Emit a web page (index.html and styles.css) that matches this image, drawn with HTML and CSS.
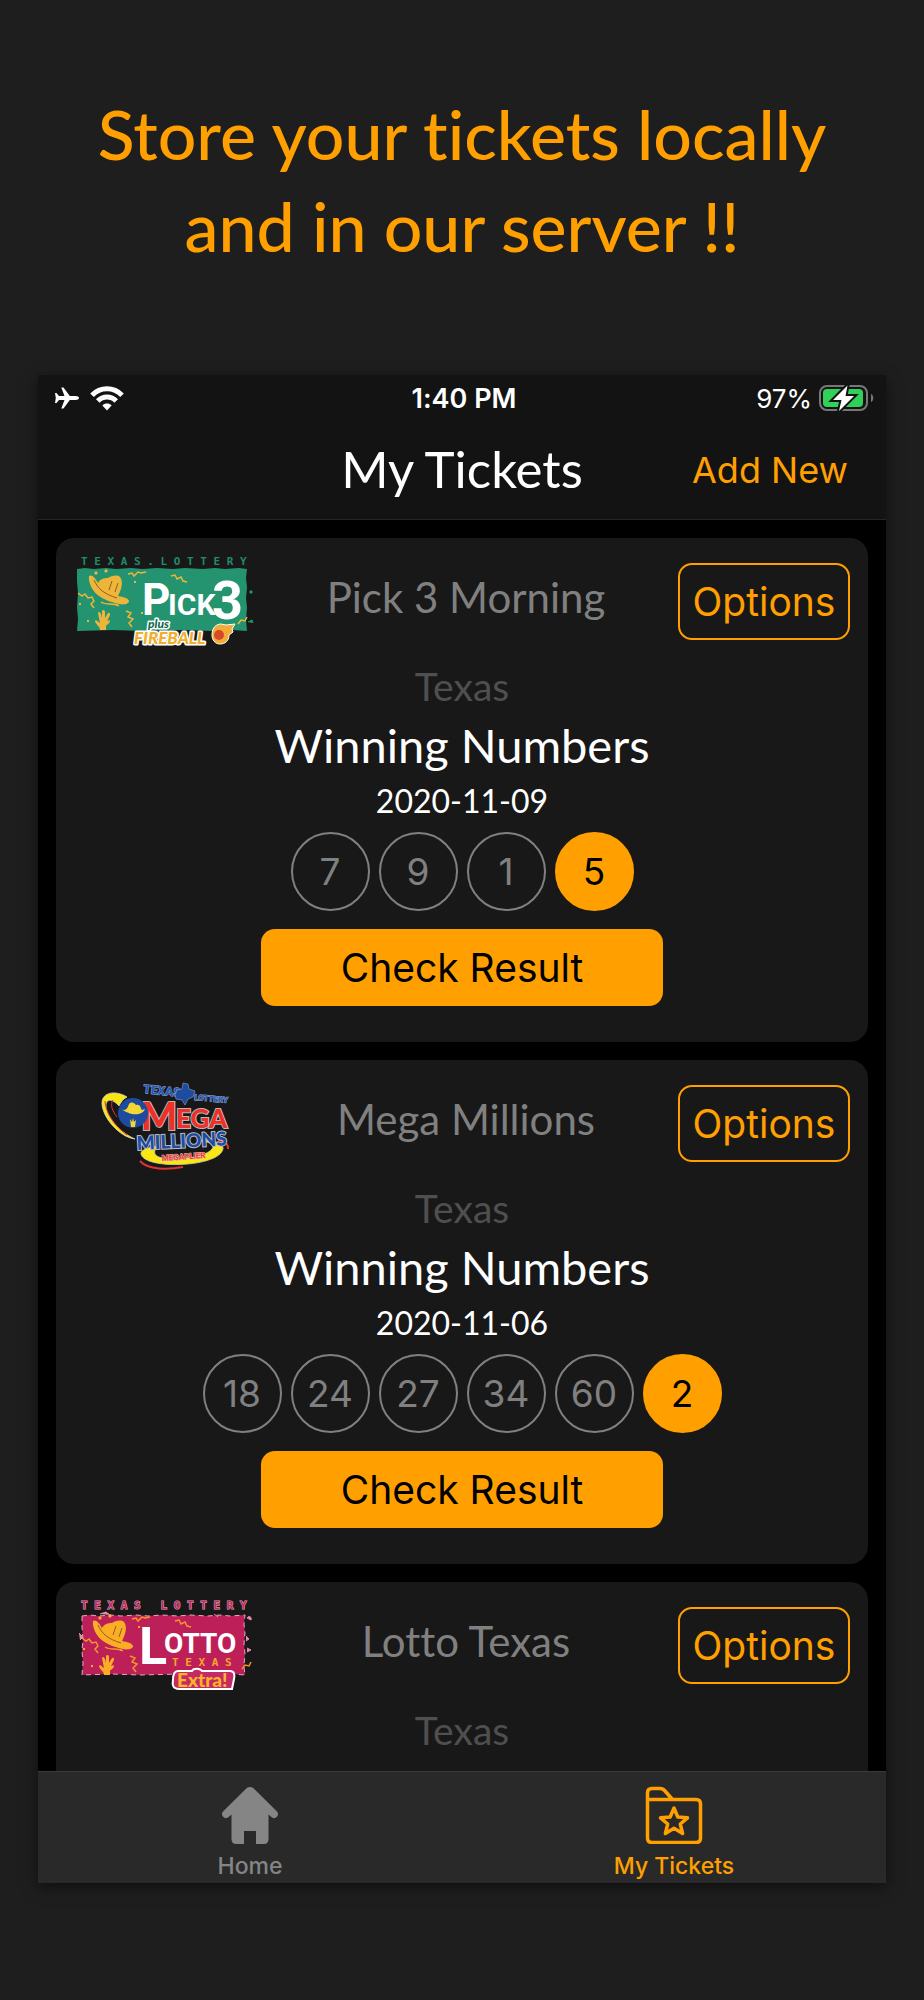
FILE: index.html
```html
<!DOCTYPE html>
<html lang="en">
<head>
<meta charset="utf-8">
<meta name="viewport" content="width=device-width, initial-scale=1">
<title>My Tickets</title>
<link rel="stylesheet" href="styles.css">
</head>
<body>
<svg class="defs" aria-hidden="true">
  <symbol id="cowboy" viewBox="0 0 180 100">
    <path d="M15 25c3-2 6 2 9 7 2-4 6-5 10-5 3-2 9-4 12-1 4 5 1 13-2 19 5 1 10 2 11 5 0 3-5 4-10 3-9-2-16-5-20-8-6-4-11-13-10-20z"/>
    <path d="M20 29c4 9 10 14 23 18M35 39l3-9M41 41l3-9" fill="none" stroke="#8f5f1c" stroke-width="1"/>
    <path d="M26 79c0-4-5-6-5-9 1-2 3 1 5 2l-2-10c1-2 2-1 3 1l1 4v-7c1-2 3-1 3 1v6l3-5c2-1 2 1 2 2l-3 6 3-1c0 4-3 4-4 6v4zM20 22l2-2 2 2-2 2zM30 20l2-2 2 2-2 2zM5 52h2v2H5zM13 69h2v2h-2zM42 53h2v2h-2zM60 30h2v2h-2zM67 61h2v2h-2z"/>
    <path d="M54 23l4-1 2 3 4-4 3 1 5-1M4 42l4 3 3-2 3 4 4-1 2 4-3 3 3 4M52 60l5 2-3 4 5 2-4 4 3 4M97 25l4-1 2 4 4-2 2 4 4 1M164 73l3-4 4 1 2-4M27 51c6 4 12 0 18 4" fill="none" stroke="currentColor" stroke-width="1.500"/>
  </symbol>
</svg>

<header class="promo">
  <h1 class="promo-title">Store your tickets locally<br>and in our server !!</h1>
</header>

<div class="phone">
  <div class="topbar">
    <div class="status">
      <div class="status-left">
        <svg width="26" height="24" viewBox="0 0 26 24" fill="#fff" role="img" aria-label="Airplane mode"><path d="M25 12c0-1.200-1.500-2-3.500-2h-5.700L9.500 1.500H7.300L10.500 10H5L2.500 7H1l.8 5L1 17h1.500L5 14h5.500l-3.200 8.500h2.200l6.300-8.500h5.700c2 0 3.500-.8 3.500-2z"/></svg>
        <svg width="36" height="26" viewBox="0 0 36 26" role="img" aria-label="Wi-Fi"><g fill="none" stroke="#fff" stroke-width="5"><path d="M3 10.200C11.300 1.600 24.700 1.600 33 10.200"/><path d="M8.800 16c5-5.300 13.400-5.300 18.400 0"/></g><path d="M18 25.500l-4.600-5c2.300-2.600 6.900-2.600 9.200 0z" fill="#fff"/></svg>
      </div>
      <time class="status-time">1:40 PM</time>
      <div class="status-right">
        <span>97%</span>
        <svg width="56" height="30" viewBox="0 0 56 30" role="img" aria-label="Battery charging"><rect x="2" y="3" width="47" height="24" rx="7" fill="none" stroke="#77777a" stroke-width="2"/><rect x="5" y="6" width="40" height="18" rx="4" fill="#30d158"/><path d="M53 11c3 1 3 7 0 8z" fill="#77777a"/><path d="M29.500 2.500L15 17h8.500L21 28l15-15h-8.500z" fill="#fff" stroke="#131313" stroke-width="4" paint-order="stroke"/></svg>
      </div>
    </div>
    <nav class="navbar">
      <h2 class="nav-title">My Tickets</h2>
      <button class="nav-add" type="button">Add New</button>
    </nav>
  </div>

  <main class="list">
    <article class="card">
      <div class="card-head">
        <svg class="logo" viewBox="0 0 180 100" role="img" aria-label="Texas Lottery Pick 3 plus Fireball">
          <text class="tag" x="7" y="14" fill="#238a69">T E X A S . L O T T E R Y</text>
          <path d="M3 18l8-1 9 1 12-1 10 1 15-1 12 1 14-1 16 1 12-1 18 1 12-1 10 1 14-1 8 1-1 9 1 9-1 11 1 10-1 12 1 11-14-1-20 1-30-1-40 1-30-1-36 1 1-12-1-12 1-14-1-12z" fill="#249470"/>
          <use href="#cowboy" fill="#edb63b" color="#edb63b"/>
          <path d="M174 71l4-2 1 3M176 40h2v2h-2z" stroke="#249470" fill="#249470"/>
          <g class="block" fill="#fff"><text x="68" y="64" font-size="44">P</text><text x="94" y="64" font-size="30">ICK</text><text x="138" y="68" font-size="54">3</text></g>
          <g class="outlined"><text x="74" y="77" font-size="12" fill="#17684e">plus</text><text x="60" y="93" font-size="17" fill="#f0ae2c">FIREBALL</text></g>
          <path d="M138 84c0-8 5-11 9-11l5 1 9-1-3 5 1 3-4 3c0 6-4 9-9 9s-8-4-8-9z" fill="#f3ad35" stroke="#fff" stroke-width="1"/><circle cx="145" cy="84" r="5" fill="#d54a2b"/>
        </svg>
        <h3 class="card-title">Pick 3 Morning</h3>
        <button class="options" type="button">Options</button>
      </div>
      <p class="region">Texas</p>
      <h4 class="winning">Winning Numbers</h4>
      <time class="date">2020-11-09</time>
      <ul class="balls"><li>7</li><li>9</li><li>1</li><li class="bonus">5</li></ul>
      <button class="check" type="button">Check Result</button>
    </article>

    <article class="card">
      <div class="card-head">
        <svg class="logo" viewBox="0 0 180 100" role="img" aria-label="Texas Lottery Mega Millions with Megaplier">
          <path d="M61 66C45 64 28 44 28 30c0-11 14-13 25-6-4 2-6 5-8 9-6-7-13-8-13 0 0 10 13 26 29 33z" fill="#f8e713" stroke="#d9d9c8" stroke-width=".8"/>
          <path d="M31 28c0 10 9 25 22 34M39 27c-3 4-1 11 4 17" fill="none" stroke="#df3430" stroke-width="1"/>
          <path d="M67 80c0 17 78 15 82-4 1-8-15-9-24-8 13 1 16 4 13 8-7 10-53 14-57 5-1-3 0-5 4-8-10 1-18 4-18 7z" fill="#f8e713" stroke="#d4d2a4" stroke-width=".8"/>
          <path d="M66 88c8 9 28 9 43 6M144 67c7 1 11 5 10 9" fill="none" stroke="#df3430" stroke-width="2"/>
          <text class="block mega-blue" x="69" y="20" font-size="12" transform="rotate(6 69 20)">TEXAS</text>
          <path d="M103 17l5-1 1-6 5 1 1 5 6 2-2 6-5 2-3 6-3-5-6-1-1-4z" fill="#1c4ba0" stroke="#8da3ca" stroke-width=".6"/>
          <text class="block mega-blue" x="120" y="27" font-size="8" transform="rotate(5 120 27)">LOTTERY</text>
          <g class="heavy" fill="#ee3028" stroke="#b7b7ba"><text x="67" y="57" font-size="38">M</text><text x="102" y="55" font-size="26">EGA</text></g>
          <circle cx="59" cy="40" r="15" fill="#1c4ba0"/>
          <path d="M48 36c3 2 5 1 7-5 3-3 5-1 7 1 5-1 4 3 6 5l3-1c-3 8-17 6-23 0zM57 54l-1-8 2 3 1-4 1 4 2-2-1 7z" fill="#f5d733"/>
          <text class="heavy" x="63" y="77" font-size="19" fill="#1c4ba0" stroke="#b9bdca" transform="rotate(-3 63 77)">MILLIONS</text>
          <text class="block" x="88" y="88" font-size="8" fill="#ee3a35" stroke="#e4bcb5" stroke-width="1" paint-order="stroke" transform="rotate(-4 88 88)">MEGAPLIER</text>
        </svg>
        <h3 class="card-title">Mega Millions</h3>
        <button class="options" type="button">Options</button>
      </div>
      <p class="region">Texas</p>
      <h4 class="winning">Winning Numbers</h4>
      <time class="date">2020-11-06</time>
      <ul class="balls"><li>18</li><li>24</li><li>27</li><li>34</li><li>60</li><li class="bonus">2</li></ul>
      <button class="check" type="button">Check Result</button>
    </article>

    <article class="card card-cut">
      <div class="card-head">
        <svg class="logo" viewBox="0 0 180 100" role="img" aria-label="Texas Lottery Lotto Texas Extra!">
          <text class="tag" x="7" y="14" fill="#c52a64" stroke="#e3a4bb" stroke-width="1" paint-order="stroke">T E X A S   L O T T E R Y</text>
          <path d="M8 21l8-1 9 1 12-1 10 1 15-1 12 1 14-1 16 1 12-1 18 1 12-1 10 1 15-1-1 9 1 9-1 11 1 10-1 12 1 9-14-1-20 1-30-1-40 1-30-1-29 1 1-12-1-12 1-12-1-12z" fill="#bd2058" stroke="#e7a7bd" stroke-width="1" stroke-dasharray="5 4"/>
          <use href="#cowboy" x="4" y="1" fill="#fbae25" color="#f0962c"/>
          <path d="M5 38l4 4-3 3M26 19l6-2 4 3M172 41l3 3-3 2M173 57l4-2-4-2M140 19l4 3M173 23c2-3 5-1 4 2z" fill="#e58bab" stroke="#e58bab"/>
          <g class="block" fill="#fff"><text x="65" y="69" font-size="52">L</text><text x="90" y="58" font-size="28">OTTO</text></g>
          <text class="tag" x="98" y="71" fill="#f7a52b">T E X A S</text>
          <path d="M104 76h14c1-3 8-3 10 0h28c4 0 5 3 4 8l-2 10h-53c-6 0-7-4-6-9 0-5 1-9 5-9z" fill="#c52a64" stroke="#fff" stroke-width="2"/>
          <text class="extra" x="103" y="92" font-size="19" fill="#fdb529">Extra!</text>
        </svg>
        <h3 class="card-title">Lotto Texas</h3>
        <button class="options" type="button">Options</button>
      </div>
      <p class="region">Texas</p>
    </article>
  </main>

  <nav class="tabs">
    <a class="tab" href="#home">
      <svg width="58" height="58" viewBox="0 0 58 58" aria-hidden="true"><path d="M29 1c-2 0-3 .8-4.500 2.300L2 25.500c-3 3.200 1 8.500 5 6l3.500-3V53c0 3 1.500 5 4.500 5h8V45h12v13h8c3 0 4.500-2 4.500-5V28.500l3.500 3c4 2.500 8-2.800 5-6L33.500 3.300C32 1.800 31 1 29 1z" fill="currentColor"/></svg>
      <span>Home</span>
    </a>
    <a class="tab tab-active" href="#tickets" aria-current="page">
      <svg width="58" height="58" viewBox="0 0 58 58" fill="none" stroke="currentColor" stroke-width="3.500" stroke-linejoin="round" aria-hidden="true"><path d="M2.500 13.500V7c0-3 1.500-4.500 4.500-4.500h8c2.500 0 3.500.5 5 2.500l7.500 8.500H51c3 0 4.500 1.500 4.500 4.500v34c0 3-1.500 4.500-4.500 4.500H7c-3 0-4.500-1.500-4.500-4.500zH29"/><path d="M29 22l3.800 9 9.700.8-7.200 6.200 2.300 9.500-8.600-5.200-8.600 5.200 2.300-9.500-7.200-6.200 9.700-.8z"/></svg>
      <span>My Tickets</span>
    </a>
  </nav>
</div>
</body>
</html>
```
FILE: styles.css
```css
* { box-sizing: border-box; }

body {
  margin: 0;
  background: #1e1e1e;
  color: #fff;
  font-family: Inter, "Liberation Sans", sans-serif;
  font-variant-ligatures: none;
}

h1, h2, h3, h4, p, ul { margin: 0; padding: 0; font-weight: 400; }

button {
  border: 0;
  background: none;
  font-family: inherit;
  cursor: pointer;
}

.defs { position: absolute; width: 0; height: 0; }

.promo { padding: 88px 32px 103px; }

.promo-title {
  color: #ffa000;
  font-family: Lato, sans-serif;
  font-size: 68px;
  font-weight: 500;
  line-height: 92px;
  text-align: center;
}

.phone {
  margin: 0 38px 116px;
  background: #000;
  box-shadow: 0 4px 14px rgba(0, 0, 0, 0.5);
}

.topbar {
  background: #131313;
  border-bottom: 1px solid #262626;
}

.status {
  display: grid;
  grid-template-columns: 1fr auto 1fr;
  align-items: center;
  height: 46px;
  padding: 0 12px 0 16px;
  font-size: 26px;
}

.status-left, .status-right { display: flex; align-items: center; gap: 9px; }
.status-right { justify-content: flex-end; gap: 6px; }
.status-time { font-size: 27px; font-weight: 600; }

.navbar {
  display: grid;
  grid-template-columns: 1fr auto 1fr;
  align-items: center;
  height: 98px;
  padding: 0 38px;
}

.nav-title {
  grid-column: 2;
  padding-bottom: 2px;
  font-family: Lato, sans-serif;
  font-size: 51px;
  line-height: 64px;
}

.nav-add {
  justify-self: end;
  padding: 0;
  color: #ffa000;
  font-size: 36px;
}

.list {
  display: flex;
  flex-direction: column;
  gap: 18px;
  padding: 18px 18px 0;
}

.card {
  display: flex;
  flex-direction: column;
  align-items: center;
  padding: 13px 18px 36px;
  border-radius: 18px;
  background: #181818;
}

.card-cut { padding-bottom: 15px; border-radius: 18px 18px 0 0; }

.card-head { display: flex; align-items: center; align-self: stretch; }

.logo { width: 180px; height: 100px; overflow: visible; }

.card-title {
  flex: 1;
  padding-bottom: 8px;
  color: #808080;
  font-family: Lato, sans-serif;
  font-size: 42px;
  line-height: 60px;
  text-align: center;
}

.options {
  width: 172px;
  height: 77px;
  padding: 0;
  border: 2px solid #ffa000;
  border-radius: 14px;
  color: #ffa000;
  font-size: 39px;
}

.region {
  margin-top: 9px;
  color: #4f4f4f;
  font-family: Lato, sans-serif;
  font-size: 39px;
  line-height: 52px;
}

.winning {
  font-family: Lato, sans-serif;
  font-size: 47px;
  line-height: 66px;
}

.date {
  font-family: Lato, sans-serif;
  font-size: 32px;
  line-height: 46px;
}

.balls {
  display: flex;
  gap: 9px;
  margin: 8px 0 18px;
  list-style: none;
}

.balls li {
  display: grid;
  place-items: center;
  width: 79px;
  height: 79px;
  border: 2px solid #808080;
  border-radius: 50%;
  color: #808080;
  font-size: 37px;
}

.balls .bonus { border-color: #ffa000; background: #ffa000; color: #000; }

.check {
  width: 402px;
  height: 77px;
  border-radius: 14px;
  background: #ffa000;
  color: #000;
  font-size: 39px;
}

.tabs {
  display: flex;
  height: 112px;
  border-top: 1px solid #3a3a3a;
  background: #292929;
}

.tab {
  flex: 1;
  display: flex;
  flex-direction: column;
  align-items: center;
  gap: 9px;
  padding-top: 14px;
  color: #858585;
  font-size: 23px;
  font-weight: 500;
  line-height: 26px;
  text-decoration: none;
}

.tab-active { color: #ffa000; }

.tag { font: 700 11px "DejaVu Sans Mono", monospace; white-space: pre; }
.block { font-family: Roboto, sans-serif; font-weight: 700; }
.mega-blue { fill: #2456b5; stroke: #8da3ca; stroke-width: 1px; paint-order: stroke; }
.heavy { font-family: Lato, sans-serif; font-weight: 900; stroke-width: 2px; paint-order: stroke; }
.outlined { font-family: Lato, sans-serif; font-weight: 900; font-style: italic; stroke: #fff; stroke-width: 3px; paint-order: stroke; stroke-linejoin: round; }
.extra { font-family: Lato, sans-serif; font-weight: 900; }
```
